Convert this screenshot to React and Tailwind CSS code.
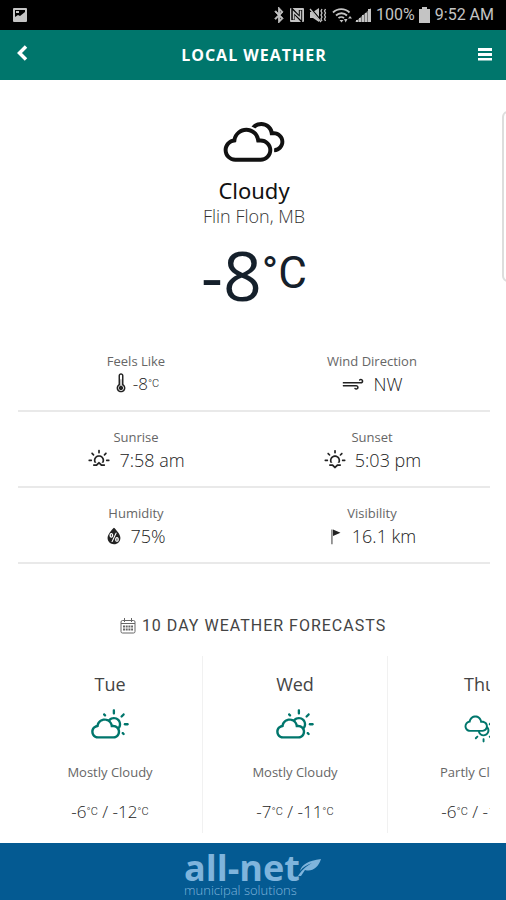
import React from "react";
import { FaBluetoothB } from "react-icons/fa";
import {
  WiCloudy,
  WiDayCloudy,
  WiDayCloudyHigh,
  WiHumidity,
  WiSmallCraftAdvisory,
  WiStrongWind,
  WiSunrise,
  WiSunset,
  WiThermometer,
} from "react-icons/wi";

const DETAILS = [
  { label: "Feels Like", value: "-8", unit: "°C", icon: WiThermometer, narrow: true, small: true },
  { label: "Wind Direction", value: "NW", icon: WiStrongWind },
  { label: "Sunrise", value: "7:58 am", icon: WiSunrise },
  { label: "Sunset", value: "5:03 pm", icon: WiSunset },
  { label: "Humidity", value: "75%", icon: WiHumidity, narrow: true },
  { label: "Visibility", value: "16.1 km", icon: WiSmallCraftAdvisory, narrow: true },
];

const FORECAST = [
  { day: "Tue", text: "Mostly Cloudy", high: "-6", low: "-12", icon: WiDayCloudy },
  { day: "Wed", text: "Mostly Cloudy", high: "-7", low: "-11", icon: WiDayCloudy },
  { day: "Thu", text: "Partly Cloudy", high: "-6", low: "-13", icon: WiDayCloudyHigh },
];

function Unit() {
  return <span className="font-['Roboto',sans-serif] text-[11px] align-[3px]">°C</span>;
}

function StatusBar() {
  return (
    <div className="flex items-center h-[30px] px-3 bg-black text-[#c4c4c4]">
      <svg className="w-4 h-4" viewBox="0 0 16 16" aria-hidden="true">
        <path fill="currentColor" fillRule="evenodd" d="M2 1h12a1 1 0 0 1 1 1v12a1 1 0 0 1-1 1H2a1 1 0 0 1-1-1V2a1 1 0 0 1 1-1zm1 2v7l3-2 2 1 5-4V3zM4 4h3v2H4z" />
      </svg>
      <div className="flex items-center ml-auto">
        <FaBluetoothB className="w-4 h-4" stroke="currentColor" strokeWidth="24" />
        <svg className="w-4 h-4 ml-[2px]" viewBox="0 0 16 16" aria-hidden="true">
          <rect x="1" y="1" width="14" height="14" rx="1" fill="currentColor" />
          <path d="M4 13V4l7.500 8V3" fill="none" stroke="#000" strokeWidth="3.400" />
          <path d="M4.500 12.500V5l7 6.500V3.500" fill="none" stroke="currentColor" strokeWidth="1.500" />
        </svg>
        <svg className="w-[18px] h-4 ml-1" viewBox="0 0 18 16" fill="none" stroke="currentColor" aria-hidden="true">
          <path fill="currentColor" stroke="none" d="M1 5h3l6-4v14l-6-4H1z" />
          <path d="M1 1l11 13" stroke="#000" strokeWidth="2" />
          <path d="M1 2l11 13" strokeWidth="1.3" />
          <path d="M13 2l-1 2 1 2-1 2 1 2-1 2 1 2M16.500 2l-1 2 1 2-1 2 1 2-1 2 1 2" strokeWidth="1.3" />
        </svg>
        <svg className="w-5 h-4 ml-[5px]" viewBox="0 0 20 16" fill="none" stroke="currentColor" aria-hidden="true">
          <path d="M1 5.500C5.500 1 13 1 17.500 5.500M4 8.500c3-3 8-3 11 0M6.500 11.200c1.500-1.500 4-1.500 5.500 0" strokeWidth="1.8" />
          <path fill="currentColor" stroke="none" d="M7.500 13h4l-2 2.500zM12 12h3.500l-1.800 3.500zM16 11.500l2-2.500 2 2.500z" />
        </svg>
        <svg className="w-4 h-4 ml-[3px]" viewBox="0 0 16 16" aria-hidden="true">
          <path fill="currentColor" opacity="0.6" d="M0 15L16 1v14z" />
          <path fill="currentColor" d="M1 13h2v2H1zM4 11h2v4H4zM7 8h2v7H7zM10 6h2v9h-2zM13 2h3v13h-3z" />
        </svg>
        <span className="ml-[5px] font-['Roboto',sans-serif] text-base leading-5">100%</span>
        <svg className="w-[11px] h-4 ml-1" viewBox="0 0 11 16" fill="currentColor" aria-hidden="true">
          <path d="M3 0h5v2h3v14H0V2h3z" />
        </svg>
        <span className="ml-[5px] font-['Roboto',sans-serif] text-base leading-5">9:52 AM</span>
      </div>
    </div>
  );
}

function Header() {
  return (
    <header className="flex items-center justify-between h-[50px] px-[14px] bg-[#00766c] text-white">
      <button type="button" aria-label="Back" className="flex">
        <svg className="w-4 h-4 -mt-1" viewBox="0 0 16 16" fill="none" stroke="currentColor" strokeWidth="3.500" aria-hidden="true">
          <path d="M12 1.500L5.500 8l6.500 6.500" />
        </svg>
      </button>
      <h1 className="text-base font-bold tracking-[1px]">LOCAL WEATHER</h1>
      <button type="button" aria-label="Menu" className="flex">
        <svg className="w-[14px] h-[14px] -mt-[2px]" viewBox="0 0 14 14" fill="currentColor" aria-hidden="true">
          <path d="M0 1h14v3H0zM0 6h14v3H0zM0 11h14v2.500H0z" />
        </svg>
      </button>
    </header>
  );
}

function Current() {
  return (
    <section className="flex flex-col items-center pt-[22px] pl-[2px] text-[#111]">
      <WiCloudy className="w-[82px] h-[82px]" />
      <h2 className="-mt-2 font-['Noto_Sans',sans-serif] text-[22px] leading-7">Cloudy</h2>
      <p className="text-[18px] leading-6 font-light text-[#333]">Flin Flon, MB</p>
      <p className="mt-2 flex items-start text-[#15202b]">
        <span className="text-[68px] leading-[78px]">-8</span>
        <span className="font-['Roboto',sans-serif] text-[44px] leading-[74px]">°C</span>
      </p>
    </section>
  );
}

function Details() {
  return (
    <dl className="grid grid-cols-2 ml-[18px] mr-4 mt-[22px]">
      {DETAILS.map((item) => (
        <div key={item.label} className="flex flex-col items-center h-[76px] pt-[15px] border-b-2 border-[#e9e9e9]">
          <dt className="text-[13px] leading-5 text-[#666]">{item.label}</dt>
          <dd
            className={
              item.small
                ? "flex items-center gap-1 text-[17px] leading-[26px] font-light text-[#222]"
                : "flex items-center gap-2 text-[18px] leading-[26px] font-light text-[#222]"
            }
          >
            <span className={item.narrow ? "flex justify-center w-4" : "flex justify-center w-6"}>
              <item.icon className="shrink-0 w-[26px] h-[26px] text-[#222]" />
            </span>
            <span>
              {item.value}
              {item.unit && <Unit />}
            </span>
          </dd>
        </div>
      ))}
    </dl>
  );
}

function Forecast() {
  return (
    <section className="mt-[50px]">
      <h2 className="flex items-center justify-center gap-[6px] font-['Roboto',sans-serif] text-base leading-6 tracking-[1px] text-[#444]">
        <svg className="w-4 h-4" viewBox="0 0 16 16" fill="none" stroke="#666" aria-hidden="true">
          <rect x="1" y="2.500" width="14" height="12.500" rx="1.500" />
          <path d="M1 5.500h14M4.500 0v4M11.500 0v4" />
          <path d="M3 8.500h10M3 11.500h10" strokeWidth="2" strokeDasharray="2 0.700" />
        </svg>
        10 DAY WEATHER FORECASTS
      </h2>
      <ul className="flex ml-[18px] mr-4 mt-[18px] overflow-hidden">
        {FORECAST.map((item) => (
          <li
            key={item.day}
            className="flex flex-col items-center shrink-0 w-[185px] h-[177px] pt-4 border-r border-[#f1f1f1]"
          >
            <h3 className="text-[18px] leading-6 text-[#444]">{item.day}</h3>
            <item.icon className="w-[42px] h-[42px] mt-3 text-[#00766c]" />
            <p className="mt-3 text-[13px] leading-5 text-[#666]">{item.text}</p>
            <p className="mt-[18px] text-[17px] leading-6 font-light text-[#222]">
              {item.high}
              <Unit /> / {item.low}
              <Unit />
            </p>
          </li>
        ))}
      </ul>
    </section>
  );
}

function Footer() {
  return (
    <footer className="flex justify-center h-[57px] mt-auto pt-[9px] bg-[#045a92] text-[#7fb4dc]">
      <div>
        <p className="text-[36px] leading-8 font-bold">all-net</p>
        <p className="text-[13px] leading-3 font-light">municipal solutions</p>
      </div>
      <svg className="w-6 h-5 mt-[6px] -ml-[2px]" viewBox="0 0 24 20" aria-hidden="true">
        <path fill="currentColor" d="M2 13C4 6 10 3 23 1c-3 9-9 13-16 11l-4 6H0c3-5 7-9 14-13C9 7 5 9 2 13z" />
      </svg>
    </footer>
  );
}

export default function App() {
  return (
    <div className="relative flex flex-col min-h-screen overflow-hidden bg-white font-['Open_Sans',sans-serif]">
      <StatusBar />
      <Header />
      <main>
        <Current />
        <Details />
        <Forecast />
      </main>
      <Footer />
      {/* edge of the slide-out panel */}
      <div className="absolute -right-2 top-[111px] w-3 h-[171px] rounded-md border-2 border-[#ddd] bg-white" />
    </div>
  );
}
